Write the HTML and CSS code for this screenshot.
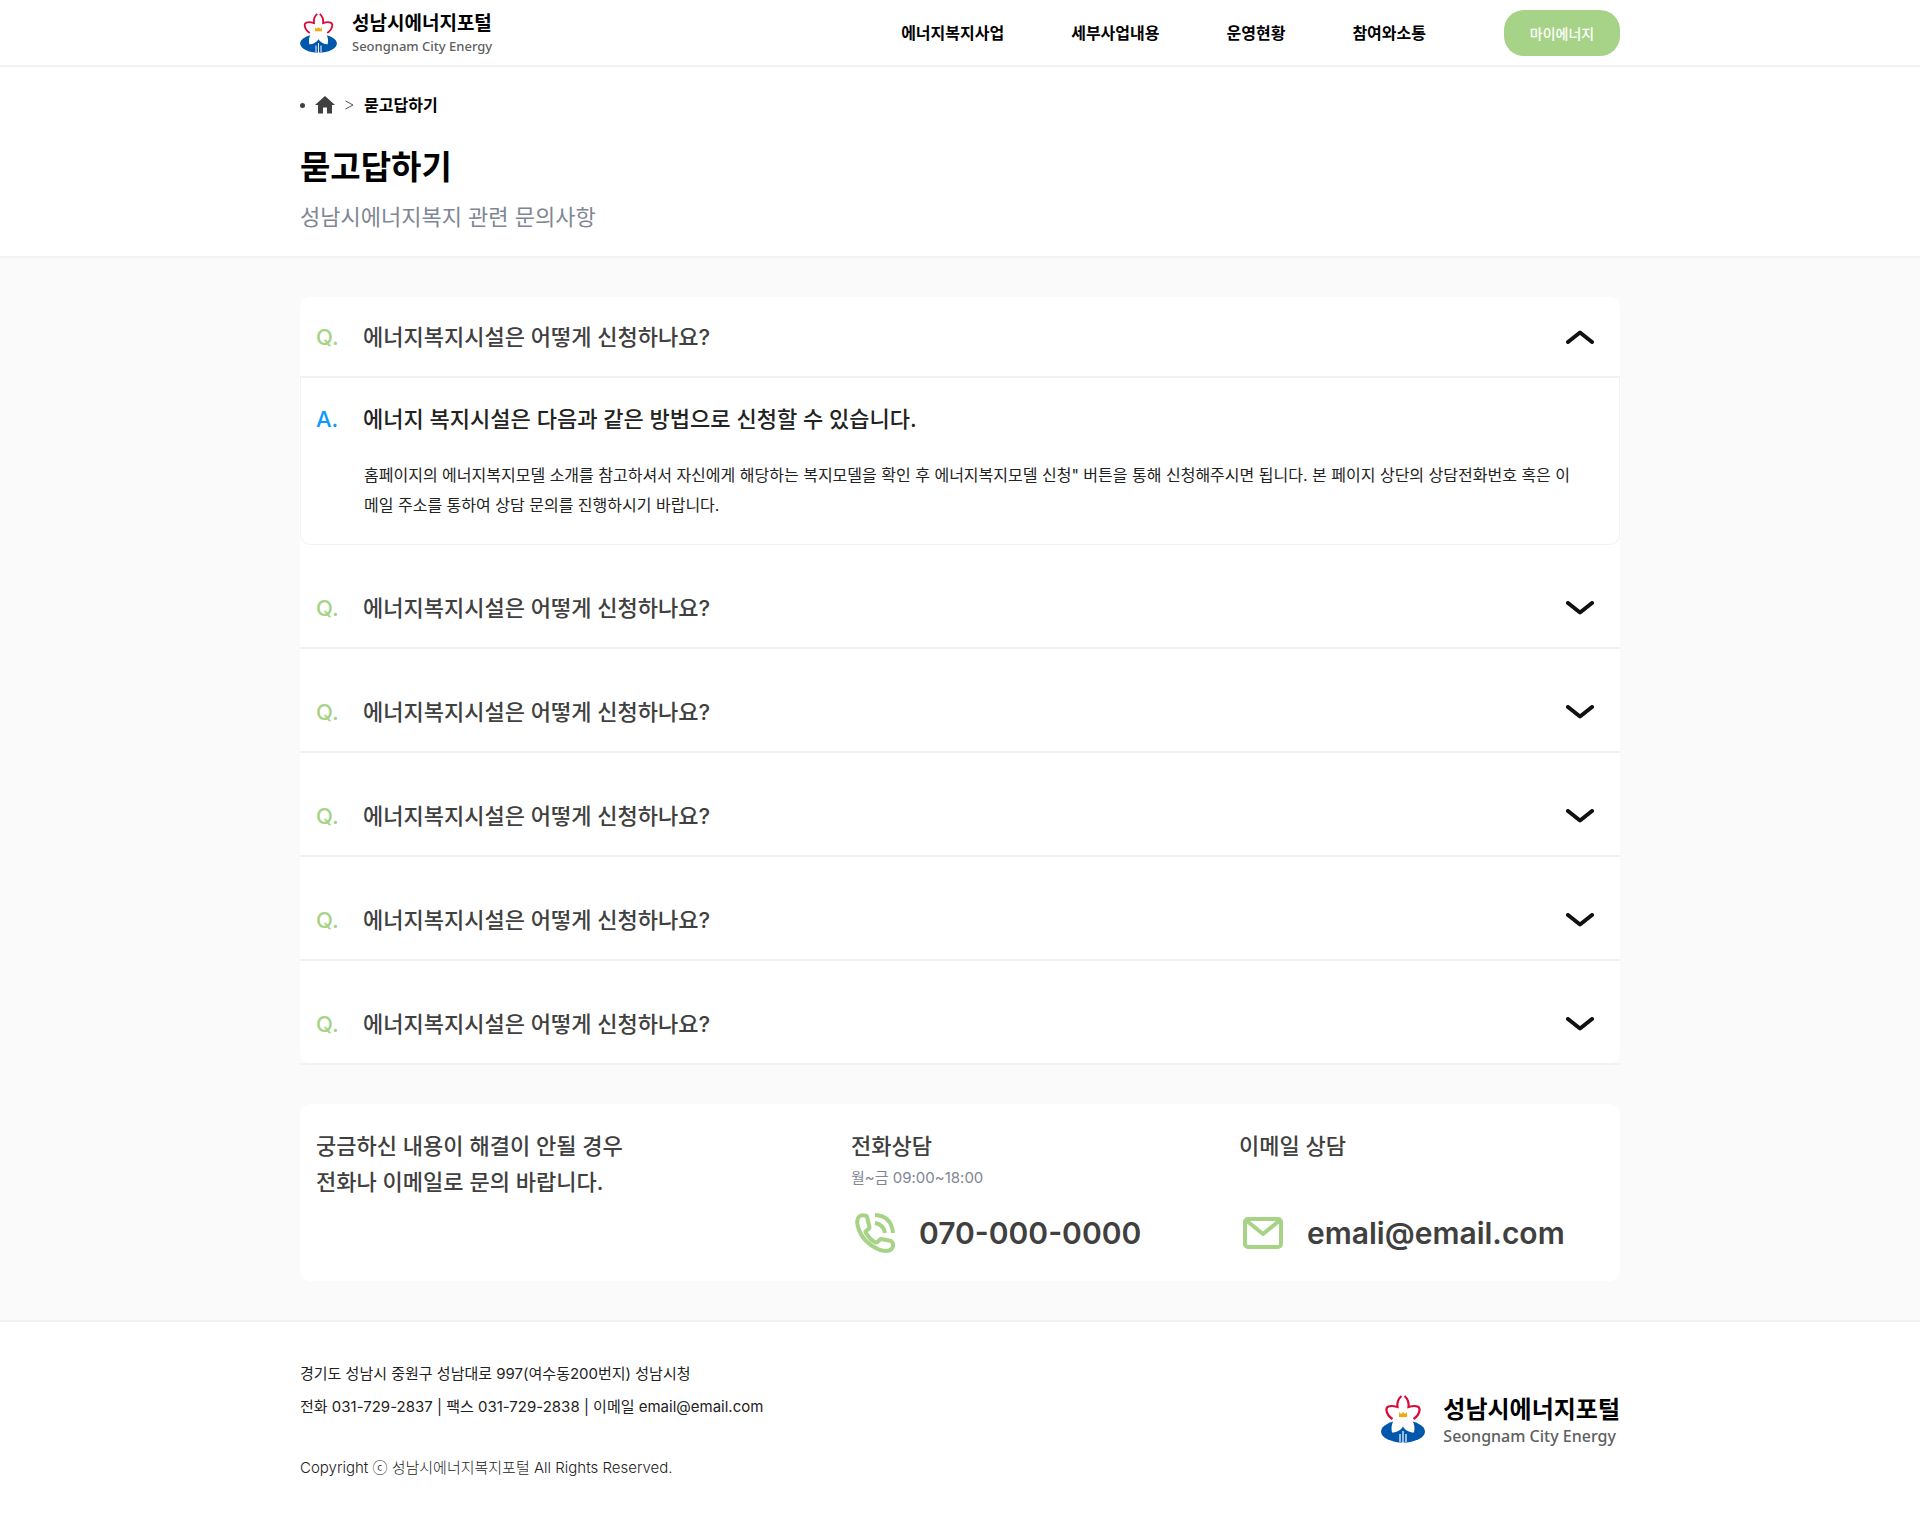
FILE: index.html
```html
<!DOCTYPE html>
<html lang="ko">
<head>
<meta charset="utf-8">
<meta name="viewport" content="width=device-width, initial-scale=1">
<title>묻고답하기 - 성남시에너지포털</title>
<link rel="stylesheet" href="styles.css">
</head>
<body>
<svg class="defs" width="0" height="0" aria-hidden="true">
  <symbol id="emblem" viewBox="0 0 44 48">
    <ellipse cx="22" cy="36.500" rx="22" ry="11" fill="#0058ad"/>
    <path d="M22 0.500C17 4 16 8 16.500 12L8 11.500Q5 12 5.500 15C6 20 9 22.500 13 25C10.500 29 10 33 11 37.500C16 37.500 20 35 22 31.500C24 35 28 37.500 33 37.500C34 33 33.500 29 31 25C35 22.500 38 20 38.500 15Q39 12 36 11.500L27.500 12C28 8 27 4 22 0.500Z" fill="#fff"/>
    <path d="M20.500 1C17 4 16 8 16.500 12C13 11 10 10.500 7.500 11.500Q5 12.500 5.500 15.500C6 19.500 8.500 22 11.500 24M23.500 1C27 4 28 8 27.500 12C31 11 34 10.500 36.500 11.500Q39 12.500 38.500 15.500C38 19.500 35.500 22 32.500 24" fill="none" stroke="#dc0a3c" stroke-width="2.200"/>
    <path d="M18 17l2 2 2-2 2 2 2-2v5h-8z" fill="#f5a60a"/>
    <path d="M19 39v8M22 36v12M25 39v8" stroke="#fff" stroke-width="1.200"/>
  </symbol>
  <symbol id="chevron" viewBox="0 0 28 14">
    <path d="M2 2L14 11.500L26 2" fill="none" stroke="#111" stroke-width="4" stroke-linecap="round" stroke-linejoin="round"/>
  </symbol>
</svg>

<header class="header">
  <div class="wrap header-row">
    <a class="logo" href="#">
      <svg class="logo-mark" aria-hidden="true"><use href="#emblem"/></svg>
      <span class="logo-text"><strong class="logo-ko">성남시에너지포털</strong><span class="logo-en">Seongnam City Energy</span></span>
    </a>
    <nav class="nav">
      <a href="#">에너지복지사업</a>
      <a href="#">세부사업내용</a>
      <a href="#">운영현황</a>
      <a href="#">참여와소통</a>
    </nav>
    <button class="my-button" type="button">마이에너지</button>
  </div>
</header>

<section class="intro">
  <div class="wrap">
    <nav class="crumbs" aria-label="현재 위치">
      <span class="dot"></span>
      <a class="home" href="#" aria-label="홈"><svg width="20" height="18" viewBox="0 0 20 18"><path d="M10 0L0 9h3v8.500h5V11.500h4v6h5V9h3z" fill="#404040"/></svg></a>
      <svg width="9" height="10" viewBox="0 0 9 10" aria-hidden="true"><path d="M0.500 1L8 5L0.500 9" fill="none" stroke="#555" stroke-width="1"/></svg>
      <a class="here" href="#">묻고답하기</a>
    </nav>
    <h1 class="title">묻고답하기</h1>
    <p class="subtitle">성남시에너지복지 관련 문의사항</p>
  </div>
</section>

<main class="main">
  <div class="wrap main-stack">
    <div class="faq">
      <ul class="faq-list">
        <li class="item">
          <button class="question" type="button" aria-expanded="true"><span class="mark">Q.</span><span class="label">에너지복지시설은 어떻게 신청하나요?</span><svg class="chevron" aria-hidden="true"><use href="#chevron"/></svg></button>
          <div class="answer">
            <p class="answer-head"><span class="mark">A.</span><span>에너지 복지시설은 다음과 같은 방법으로 신청할 수 있습니다.</span></p>
            <p class="answer-text">홈페이지의 에너지복지모델 소개를 참고하셔서 자신에게 해당하는 복지모델을 확인 후 에너지복지모델 신청" 버튼을 통해 신청해주시면 됩니다. 본 페이지 상단의 상담전화번호 혹은 이메일 주소를 통하여 상담 문의를 진행하시기 바랍니다.</p>
          </div>
        </li>
        <li class="item"><button class="question" type="button" aria-expanded="false"><span class="mark">Q.</span><span class="label">에너지복지시설은 어떻게 신청하나요?</span><svg class="chevron" aria-hidden="true"><use href="#chevron"/></svg></button></li>
        <li class="item"><button class="question" type="button" aria-expanded="false"><span class="mark">Q.</span><span class="label">에너지복지시설은 어떻게 신청하나요?</span><svg class="chevron" aria-hidden="true"><use href="#chevron"/></svg></button></li>
        <li class="item"><button class="question" type="button" aria-expanded="false"><span class="mark">Q.</span><span class="label">에너지복지시설은 어떻게 신청하나요?</span><svg class="chevron" aria-hidden="true"><use href="#chevron"/></svg></button></li>
        <li class="item"><button class="question" type="button" aria-expanded="false"><span class="mark">Q.</span><span class="label">에너지복지시설은 어떻게 신청하나요?</span><svg class="chevron" aria-hidden="true"><use href="#chevron"/></svg></button></li>
        <li class="item"><button class="question" type="button" aria-expanded="false"><span class="mark">Q.</span><span class="label">에너지복지시설은 어떻게 신청하나요?</span><svg class="chevron" aria-hidden="true"><use href="#chevron"/></svg></button></li>
      </ul>
    </div>

    <section class="contact">
      <p class="contact-lead">궁금하신 내용이 해결이 안될 경우<br>전화나 이메일로 문의 바랍니다.</p>
      <div class="channel">
        <h2>전화상담</h2>
        <p class="hours">월~금 09:00~18:00</p>
        <a class="reach" href="tel:070-000-0000">
          <svg width="48" height="48" viewBox="0 0 48 48" fill="none" stroke="#a6d386" stroke-width="4" stroke-linejoin="round" aria-hidden="true"><path d="M8 7.500C10 6 14 5.500 16 7.500L18.500 18.500C18 21 15 20.500 14.500 23C17 28 20 31 24.500 33.500C28 34 27.500 30.500 30 30L40 32C42.500 34 42.500 37 41 39.500C38 43 34 42.500 29 41C17 36 9 27 6.500 16C6 13 6 10 8 7.500Z"/><path d="M24 6C35 6.500 41 13 42 24M24 14C30 15 33 18 34 24"/></svg>
          <span>070-000-0000</span>
        </a>
      </div>
      <div class="channel">
        <h2>이메일 상담</h2>
        <a class="reach" href="mailto:emali@email.com">
          <svg width="48" height="48" viewBox="0 0 48 48" fill="none" stroke="#a6d386" stroke-width="4" stroke-linejoin="round" aria-hidden="true"><rect x="6" y="10" width="36" height="28" rx="3"/><path d="M8 12L24 25L40 12"/></svg>
          <span>emali@email.com</span>
        </a>
      </div>
    </section>
  </div>
</main>

<footer class="footer">
  <div class="wrap footer-row">
    <div class="footer-text">
      <p>경기도 성남시 중원구 성남대로 997(여수동200번지) 성남시청</p>
      <p>전화 031-729-2837 | 팩스 031-729-2838 | 이메일 email@email.com</p>
      <p class="copyright">Copyright ⓒ 성남시에너지복지포털 All Rights Reserved.</p>
    </div>
    <a class="logo logo-large" href="#">
      <svg class="logo-mark" aria-hidden="true"><use href="#emblem"/></svg>
      <span class="logo-text"><strong class="logo-ko">성남시에너지포털</strong><span class="logo-en">Seongnam City Energy</span></span>
    </a>
  </div>
</footer>
</body>
</html>
```
FILE: styles.css
```css
* { box-sizing: border-box; }

body {
  margin: 0;
  background: #fff;
  color: #222;
  font-family: Inter, "Noto Sans CJK KR", sans-serif;
  font-size: 16px;
}

h1, h2, p, ul { margin: 0; padding: 0; }
ul { list-style: none; }
a { color: inherit; text-decoration: none; }
button { border: 0; background: none; font: inherit; color: inherit; cursor: pointer; }
svg { display: block; flex: none; }
.defs { position: absolute; }

.wrap { max-width: 1320px; margin: 0 auto; }

/* Header */
.header { border-bottom: 2px solid #f2f2f2; }
.header-row { display: flex; align-items: center; min-height: 65px; }

.logo { display: flex; align-items: center; gap: 15px; }
.logo-mark { width: 37px; height: 40px; }
.logo-text { display: flex; flex-direction: column; }
.logo-ko { color: #000; font-size: 19px; line-height: 26px; font-weight: 700; }
.logo-en { color: #606060; font: 500 13px/18px "Noto Sans", sans-serif; }

.nav { display: flex; gap: 67px; margin-left: auto; color: #000; line-height: 24px; font-weight: 700; }
.my-button {
  width: 116px;
  height: 46px;
  margin-left: 78px;
  padding: 0;
  border-radius: 20px;
  background: #a6d388;
  color: #fff;
  font-size: 14px;
  font-weight: 500;
}

/* Page heading */
.intro { padding: 26px 0 23px; border-bottom: 2px solid #f2f2f2; }
.crumbs { display: flex; align-items: center; gap: 10px; line-height: 24px; }
.dot { width: 5px; height: 5px; border-radius: 50%; background: #404040; }
.here { color: #000; font-weight: 700; }
.title { margin-top: 26px; color: #000; font-size: 33px; line-height: 48px; font-weight: 700; }
.subtitle { margin-top: 10px; color: #7f8694; font-size: 22px; line-height: 32px; font-weight: 400; }

/* Questions */
.main { padding: 39px 0; background: #fafafa; }
.main-stack { display: flex; flex-direction: column; gap: 39px; }
.faq { border-bottom: 2px solid #f2f2f2; }
.faq-list { border-radius: 10px; background: #fff; }
.item + .item { padding-top: 23px; }
.question {
  display: flex;
  align-items: center;
  width: 100%;
  height: 81px;
  padding: 0 26px 0 16px;
  border-bottom: 2px solid #f2f2f2;
  color: #404040;
  font-size: 22px;
  line-height: 32px;
  font-weight: 500;
  text-align: left;
}
.item:last-child .question { height: 79px; border-bottom: 0; }
.mark { flex: none; width: 47px; }
.question .mark { color: #a6d388; }
.label { flex: 1; }
.chevron { width: 28px; height: 14px; }
.question[aria-expanded="true"] .chevron { transform: rotate(180deg); }

.answer {
  padding: 25px 47px 24px 15px;
  border: 1px solid #f2f2f2;
  border-top: 0;
  border-radius: 0 0 10px 10px;
}
.answer-head { display: flex; font-size: 22px; line-height: 32px; font-weight: 500; }
.answer-head .mark { color: #0d99ff; }
.answer-text { margin: 25px 0 0 48px; line-height: 30px; }

/* Contact */
.contact {
  display: grid;
  grid-template-columns: 535fr 388fr 365fr;
  min-height: 177px;
  padding: 24px 16px;
  border-radius: 10px;
  background: #fff;
  color: #404040;
}
.contact-lead, .channel h2 { font-size: 22px; line-height: 36px; font-weight: 500; }
.channel { display: flex; flex-direction: column; }
.hours { color: #7f8694; font-size: 15px; line-height: 28px; }
.reach { display: flex; align-items: center; gap: 20px; margin-top: auto; font-size: 30px; font-weight: 600; }

/* Footer */
.footer { border-top: 2px solid #f2f2f2; }
.footer-row { display: flex; justify-content: space-between; align-items: center; padding: 35px 0; }
.footer-text { font-size: 15px; line-height: 33px; }
.copyright { margin-top: 28px; font-weight: 300; }
.logo-large { gap: 18px; align-items: flex-start; }
.logo-large .logo-mark { width: 44px; height: 48px; }
.logo-large .logo-ko { font-size: 24px; line-height: 30px; }
.logo-large .logo-en { font-size: 16px; line-height: 22px; }
```
